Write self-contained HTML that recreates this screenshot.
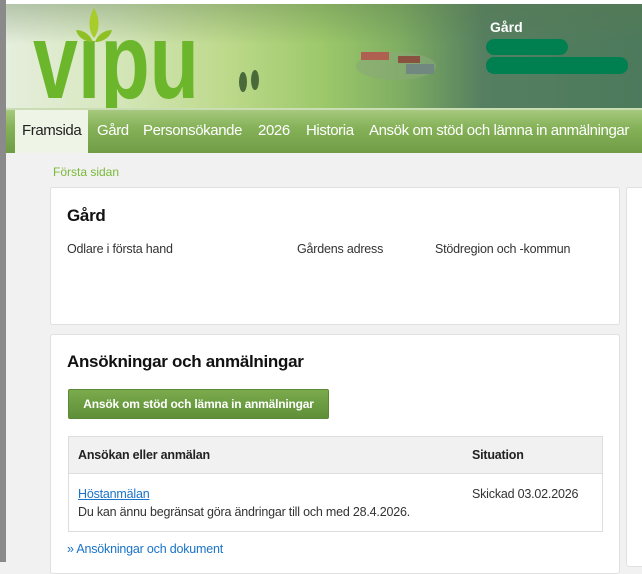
<!DOCTYPE html>
<html><head><meta charset="utf-8"><style>
*{margin:0;padding:0;box-sizing:border-box}
body{width:642px;height:562px;overflow:hidden;background:#f1f1f1;font-family:"Liberation Sans",sans-serif;position:relative}
.lbar{position:absolute;left:0;top:0;width:6px;height:562px;background:#8a8a8a}
.hdr{position:absolute;left:6px;top:4px;width:636px;height:104px;
background:linear-gradient(90deg,#e6eedd 0%,#d8e8c0 15%,#bcd98a 35%,#9cc86a 50%,#7fae62 62%,#557f60 75%,#4d7a5c 100%)}
.hdr:before{content:"";position:absolute;left:0;top:0;right:0;height:40px;background:linear-gradient(180deg,rgba(90,120,80,.35),rgba(0,0,0,0));}
.top{position:absolute;left:6px;top:0;width:636px;height:4px;background:#fff}
.nav{position:absolute;left:6px;top:108px;width:636px;height:45px;background:linear-gradient(180deg,#a6c97e 0%,#86b259 40%,#6f9c45 100%);border-top:2px solid #c9dcb4}
.nav span{position:absolute;top:12px;color:#fff;font-size:15px;letter-spacing:-0.4px}
.tab{position:absolute;left:9px;top:0;width:73px;height:43px;background:#eef4e6}
.crumb{position:absolute;left:53px;top:165px;color:#7ab83a;font-size:12px}
.panel{position:absolute;left:50px;width:570px;background:#fff;border:1px solid #e0e0e0;border-radius:3px}
h2{font-size:17px;font-weight:bold;color:#111;position:absolute;letter-spacing:-0.3px}
.lbl{position:absolute;font-size:12.5px;color:#333;letter-spacing:-0.2px}
.btn{position:absolute;left:17px;top:54px;width:261px;height:30px;background:linear-gradient(180deg,#7bab4c,#5f8f38);border:1px solid #5a8a35;border-radius:2px;color:#fff;font-weight:bold;font-size:12px;text-align:center;line-height:28px;letter-spacing:-0.2px}
.tbl{position:absolute;left:17px;top:101px;width:535px;height:96px;border:1px solid #ddd}
.th{position:absolute;left:0;top:0;width:100%;height:37px;background:#f1f1f1;border-bottom:1px solid #ddd}
</style></head><body>
<div class="lbar"></div>
<div class="top"></div>
<div class="hdr">
<svg width="636" height="104" style="position:absolute;left:0;top:0">
<ellipse cx="390" cy="62" rx="40" ry="14" fill="#8aa878" opacity=".6"/>
<rect x="355" y="48" width="28" height="8" fill="#b06050"/>
<rect x="392" y="52" width="22" height="7" fill="#8a5040"/>
<rect x="400" y="60" width="28" height="10" fill="#708880"/>
<ellipse cx="237" cy="78" rx="4" ry="10" fill="#4a6a3a"/>
<ellipse cx="249" cy="76" rx="4" ry="10" fill="#4a6a3a"/>
<text x="27" y="94" font-family="Liberation Sans" font-weight="bold" font-size="108" fill="#6cb62c" textLength="166" lengthAdjust="spacingAndGlyphs">vıpu</text>
<path d="M88 4 C82 14 82 26 88 34 C94 26 94 14 88 4Z" fill="#a8cc2a"/>
<path d="M70 26 C72 34 80 38 87 38 C84 30 77 26 70 26Z" fill="#8ec024"/>
<path d="M106 26 C104 34 96 38 89 38 C92 30 99 26 106 26Z" fill="#8ec024"/>
<text x="484" y="28" font-family="Liberation Sans" font-weight="bold" font-size="14" fill="#fff">Gård</text>
<rect x="480" y="35" width="82" height="16" rx="8" fill="#008050"/>
<rect x="480" y="53" width="142" height="17" rx="8" fill="#008050"/>
</svg>
</div>
<div class="nav">
<div class="tab"></div>
<span style="left:16px;color:#222">Framsida</span>
<span style="left:91px">Gård</span>
<span style="left:137px">Personsökande</span>
<span style="left:252px">2026</span>
<span style="left:300px">Historia</span>
<span style="left:363px">Ansök om stöd och lämna in anmälningar</span>
</div>
<div class="crumb">Första sidan</div>
<div class="panel" style="top:187px;height:138px">
<h2 style="left:16px;top:18px">Gård</h2>
<div class="lbl" style="left:16px;top:54px">Odlare i första hand</div>
<div class="lbl" style="left:246px;top:54px">Gårdens adress</div>
<div class="lbl" style="left:384px;top:54px">Stödregion och -kommun</div>
</div>
<div class="panel" style="top:334px;height:240px">
<h2 style="left:16px;top:17px">Ansökningar och anmälningar</h2>
<div class="btn">Ansök om stöd och lämna in anmälningar</div>
<div class="tbl">
<div class="th"></div>
<div class="lbl" style="left:9px;top:11px;font-weight:bold;color:#222">Ansökan eller anmälan</div>
<div class="lbl" style="left:403px;top:11px;font-weight:bold;color:#222">Situation</div>
<div class="lbl" style="left:9px;top:50px;color:#1a73c8;text-decoration:underline">Höstanmälan</div>
<div class="lbl" style="left:9px;top:68px">Du kan ännu begränsat göra ändringar till och med 28.4.2026.</div>
<div class="lbl" style="left:403px;top:50px">Skickad 03.02.2026</div>
</div>
<div class="lbl" style="left:16px;top:207px;color:#1a73c8">» Ansökningar och dokument</div>
</div>
<div class="panel" style="left:626px;top:187px;width:30px;height:380px"></div>
</body></html>
